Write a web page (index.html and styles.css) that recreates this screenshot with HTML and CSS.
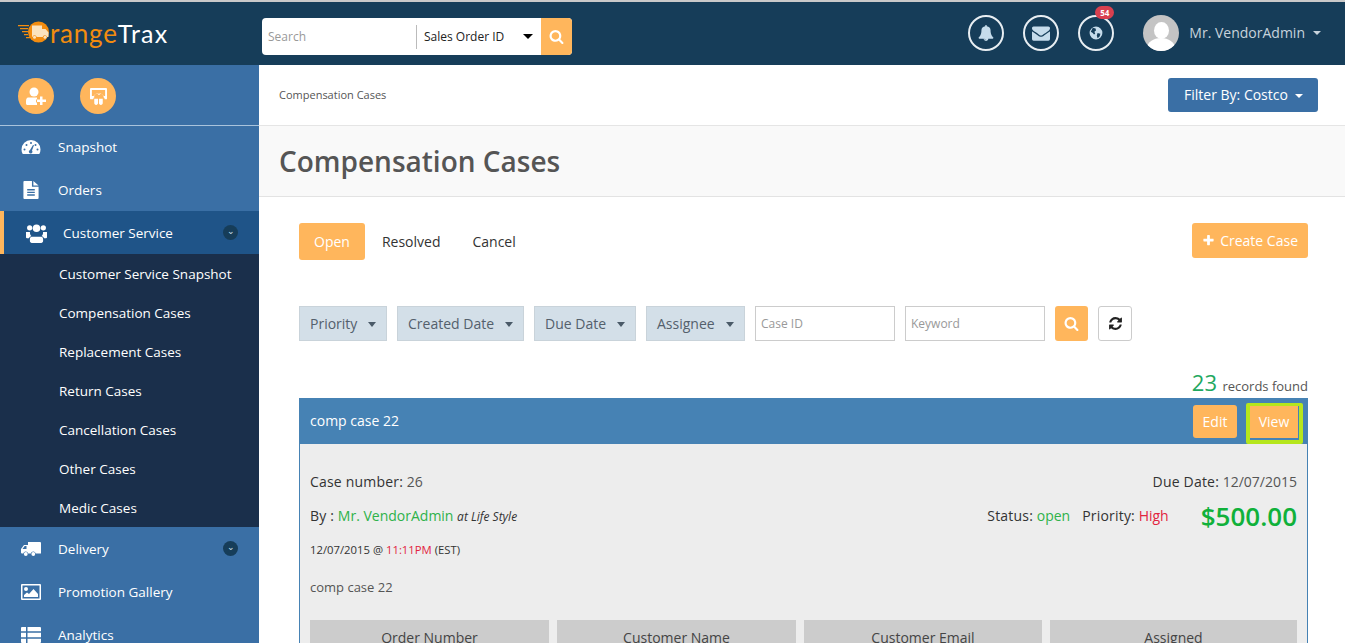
FILE: index.html
```html
<!DOCTYPE html>
<html>
<head>
    <meta charset="utf-8">
    <title>OrangeTrax - Compensation Cases</title>
    <link rel="stylesheet" href="styles.css">
</head>
<body>
<svg class="defs" width="0" height="0">
    <symbol id="i-search" viewBox="0 0 1792 1792"><path d="M1216 832q0-185-131.5-316.5t-316.5-131.5-316.5 131.5-131.5 316.5 131.5 316.5 316.5 131.5 316.5-131.5 131.5-316.5zm512 832q0 52-38 90t-90 38q-54 0-90-38l-343-342q-179 124-399 124-143 0-273.5-55.5t-225-150-150-225-55.5-273.5 55.5-273.5 150-225 225-150 273.5-55.5 273.5 55.5 225 150 150 225 55.5 273.5q0 220-124 399l343 343q37 37 37 90z"/></symbol>
    <symbol id="i-refresh" viewBox="0 0 1792 1792"><path d="M1639 1056q0 5-1 7-64 268-268 434.5t-478 166.5q-146 0-282.5-55t-243.5-157l-129 129q-19 19-45 19t-45-19-19-45v-448q0-26 19-45t45-19h448q26 0 45 19t19 45-19 45l-137 137q71 66 161 102t187 36q134 0 250-65t186-179q11-17 53-117 8-23 30-23h192q13 0 22.5 9.5t9.5 22.5zm25-800v448q0 26-19 45t-45 19h-448q-26 0-45-19t-19-45 19-45l138-138q-148-137-349-137-134 0-250 65t-186 179q-11 17-53 117-8 23-30 23h-199q-13 0-22.5-9.5t-9.5-22.5v-7q65-268 270-434.5t480-166.5q146 0 284 55.5t245 156.5l130-129q19-19 45-19t45 19 19 45z"/></symbol>
    <symbol id="i-bell" viewBox="0 0 1792 1792"><path d="M912 1696q0-16-16-16-59 0-101.5-42.5t-42.5-101.5q0-16-16-16t-16 16q0 73 51.5 124.5t124.5 51.5q16 0 16-16zm816-288q0 52-38 90t-90 38h-448q0 106-75 181t-181 75-181-75-75-181h-448q-52 0-90-38t-38-90q50-42 91-88t85-119.5 74.5-158.5 50-206 19.5-260q0-152 117-282.5t307-158.5q-8-19-8-39 0-40 28-68t68-28 68 28 28 68q0 20-8 39 190 28 307 158.5t117 282.5q0 139 19.5 260t50 206 74.5 158.5 85 119.5 91 88z"/></symbol>
    <symbol id="i-mail" viewBox="0 0 1792 1792"><path d="M1792 710v794q0 66-47 113t-113 47h-1472q-66 0-113-47t-47-113v-794q44 49 101 87 362 246 497 345 57 42 92.5 65.5t94.5 48 110 24.5h2q51 0 110-24.5t94.5-48 92.5-65.5q170-123 498-345 57-39 100-87zm0-294q0 79-49 151t-122 123q-376 261-468 325-10 7-42.5 30.5t-54 38-52 32.5-57.5 27-50 9h-2q-23 0-50-9t-57.5-27-52-32.5-54-38-42.5-30.5q-91-64-262-182.5t-205-142.5q-62-42-117-115.5t-55-136.5q0-78 41.5-130t118.5-52h1472q65 0 112.5 45t47.5 115z"/></symbol>
    <symbol id="i-plus" viewBox="0 0 1792 1792"><path d="M1600 736v192q0 40-28 68t-68 28h-416v416q0 40-28 68t-68 28h-192q-40 0-68-28t-28-68v-416h-416q-40 0-68-28t-28-68v-192q0-40 28-68t68-28h416v-416q0-40 28-68t68-28h192q40 0 68 28t28 68v416h416q40 0 68 28t28 68z"/></symbol>
    <symbol id="i-globe" viewBox="0 0 20 20"><path fill-rule="evenodd" d="M10 2a8 8 0 1 1 0 16 8 8 0 0 1 0-16zM6 3.500 9.500 4.500 10 7 8 8.500 9 11 7.500 12 6 10 3.500 8.500zM12 10l3.500 1-1 3.500-2.500 2-1-3.500z"/></symbol>
    <symbol id="i-gauge" viewBox="0 0 20 16"><path fill-rule="evenodd" d="M10 1a9.500 9.500 0 0 1 9.500 9.500c0 1.700-.4 3.200-1.200 4.500H1.700A9.300 9.300 0 0 1 .5 10.500 9.500 9.500 0 0 1 10 1zM10 3a1 1 0 1 0 0 2 1 1 0 0 0 0-2zM5.500 5a1 1 0 1 0 0 2 1 1 0 0 0 0-2zM14.500 5a1 1 0 1 0 0 2 1 1 0 0 0 0-2zM3.500 9.500a1 1 0 1 0 0 2 1 1 0 0 0 0-2zM16.500 9.500a1 1 0 1 0 0 2 1 1 0 0 0 0-2zM12 6 9 11a1.800 1.800 0 1 0 2 .5L13 6.300z"/></symbol>
    <symbol id="i-file" viewBox="0 0 16 19"><path fill-rule="evenodd" d="M1 0h8v6h7v12a1 1 0 0 1-1 1H1a1 1 0 0 1-1-1V1a1 1 0 0 1 1-1zM10.500 0 16 4.700h-5.500zM4 8.500v1.400h8V8.500zM4 11.300v1.400h8v-1.400zM4 14.100v1.400h8v-1.400z"/></symbol>
    <symbol id="i-users" viewBox="0 0 20 19"><circle cx="3.500" cy="4.500" r="2.500"/><circle cx="16.500" cy="4.500" r="2.500"/><circle cx="10" cy="5" r="3.600"/><path d="M0 8.500h3.800c-.2 1.500.3 2.900 1.300 3.800-1.200.5-2 1.300-2.400 2.200H1a1 1 0 0 1-1-1zM20 8.500h-3.800c.2 1.500-.3 2.900-1.300 3.800 1.200.5 2 1.300 2.400 2.200H19a1 1 0 0 0 1-1zM5.500 13h9c1.200 0 1.800 1 1.800 2.500v1.700c0 1-.8 1.800-1.800 1.800h-9c-1 0-1.800-.8-1.800-1.800v-1.700C3.700 14 4.300 13 5.500 13z"/></symbol>
    <symbol id="i-truck" viewBox="0 0 20 16"><path fill-rule="evenodd" d="M7 1h12a1 1 0 0 1 1 1v10.500h-5.300a2.500 2.500 0 0 0-4.900 0H7.200a2.500 2.500 0 0 0-4.900 0H1a1 1 0 0 1-1-1V8l3-4h4zM5.500 5H3.700L1.500 8h4z"/><circle cx="4.800" cy="13" r="1.900"/><circle cx="12.300" cy="13" r="1.900"/></symbol>
    <symbol id="i-picture" viewBox="0 0 20 16"><path fill-rule="evenodd" d="M1 0h18a1 1 0 0 1 1 1v14a1 1 0 0 1-1 1H1a1 1 0 0 1-1-1V1a1 1 0 0 1 1-1zM1.500 1.500v13h17v-13zM5 3a2 2 0 1 1 0 4 2 2 0 0 1 0-4zM3 13v-2l3-2.500 2 1.500 4.500-5 4.500 5v3z"/></symbol>
    <symbol id="i-list" viewBox="0 0 20 16"><path d="M0 1a1 1 0 0 1 1-1h4v4.300H0zM6.500 0H19a1 1 0 0 1 1 1v3.300H6.500zM0 5.800h5v4.400H0zM6.500 5.800H20v4.400H6.500zM0 11.700h5V16H1a1 1 0 0 1-1-1zM6.500 11.700H20V15a1 1 0 0 1-1 1H6.500z"/></symbol>
    <symbol id="i-useradd" viewBox="0 0 20 18"><circle cx="8" cy="5" r="4.500"/><path d="M2 10.500h9v2h-1v3h1V18H1.500C.7 18 0 17.300 0 16.500v-2.500c0-2 1-3.500 2-3.500z"/><path d="M14 9.500h2.500v3H20V15h-3.500v3H14v-3h-3v-2.500h3z"/></symbol>
    <symbol id="i-board" viewBox="0 0 18 18"><path fill-rule="evenodd" d="M1 0h16a1 1 0 0 1 1 1v10a1 1 0 0 1-1 1h-1.500c0-1.500-.5-2-1.200-2.300a2.600 2.600 0 0 0-2.500-3.300c-1 0-1.800.5-2.300 1.300a2.600 2.600 0 0 0-4.800 2C3.900 10 3.500 10.800 3.500 12H1a1 1 0 0 1-1-1V1a1 1 0 0 1 1-1zM2 2v6.500h1.800a4 4 0 0 1 5.200-2.300 4 4 0 0 1 5.200 2.300H16V2z"/><path d="M4.500 11.500h4v4.500c0 1-.7 2-2 2s-2-1-2-2zM9.500 11.500h4v4.500c0 1-.7 2-2 2s-2-1-2-2z"/></symbol>
    <symbol id="i-logo" viewBox="0 0 32 22"><circle cx="20.500" cy="11" r="10.500" fill="#f28c0f"/><path fill="#f28c0f" d="M0 4h11v1.300H0zM2 7h8v1.300H2zM4 10h6v1.300H4zM6 13h4v1.300H6zM8 16h4v1.300H8z"/><path fill="#fbe3bf" d="M14 4.500h10v3.500h3.500l3 3.500V16H29a2.200 2.200 0 0 0-4.300 0h-6a2.200 2.200 0 0 0-4.300 0H14z"/><circle cx="16.500" cy="16.300" r="1.500" fill="#fbe3bf"/><circle cx="27" cy="16.300" r="1.500" fill="#fbe3bf"/></symbol>
</svg>

<header class="topbar">
    <a class="logo">
        <svg class="logo-mark"><use href="#i-logo"/></svg><span class="logo-orange">range</span><span class="logo-white">Trax</span>
    </a>
    <form class="top-search">
        <span class="top-search-input">Search</span>
        <span class="top-search-type">Sales Order ID<i class="caret caret-black"></i></span>
        <span class="top-search-btn"><svg class="ico-14"><use href="#i-search"/></svg></span>
    </form>
    <div class="top-right">
        <a class="round-btn"><svg class="ico-16"><use href="#i-bell"/></svg></a>
        <a class="round-btn"><svg class="ico-18"><use href="#i-mail"/></svg></a>
        <a class="round-btn"><svg class="ico-15"><use href="#i-globe"/></svg><span class="badge">54</span></a>
        <span class="avatar"><span class="avatar-head"></span><span class="avatar-body"></span></span>
        <span class="username">Mr. VendorAdmin</span>
        <i class="caret caret-light"></i>
    </div>
</header>

<div class="layout">
    <aside class="sidebar">
        <div class="quick">
            <a class="quick-btn"><svg class="ico-quick"><use href="#i-useradd"/></svg></a>
            <a class="quick-btn"><svg class="ico-quick2"><use href="#i-board"/></svg></a>
        </div>
        <nav>
            <a class="nav-item nav-first"><svg class="nav-ico"><use href="#i-gauge"/></svg>Snapshot</a>
            <a class="nav-item"><svg class="nav-ico"><use href="#i-file"/></svg>Orders</a>
            <a class="nav-item nav-active"><svg class="nav-ico"><use href="#i-users"/></svg>Customer Service<span class="nav-toggle">&#8964;</span></a>
            <ul class="subnav">
                <li>Customer Service Snapshot</li>
                <li>Compensation Cases</li>
                <li>Replacement Cases</li>
                <li>Return Cases</li>
                <li>Cancellation Cases</li>
                <li>Other Cases</li>
                <li>Medic Cases</li>
            </ul>
            <a class="nav-item"><svg class="nav-ico"><use href="#i-truck"/></svg>Delivery<span class="nav-toggle">&#8964;</span></a>
            <a class="nav-item"><svg class="nav-ico"><use href="#i-picture"/></svg>Promotion Gallery</a>
            <a class="nav-item"><svg class="nav-ico"><use href="#i-list"/></svg>Analytics</a>
        </nav>
    </aside>

    <main class="main">
        <div class="crumbs">
            <span class="crumb">Compensation Cases</span>
            <a class="filter-by">Filter By: Costco<i class="caret caret-white"></i></a>
        </div>
        <div class="page-title"><h1>Compensation Cases</h1></div>

        <div class="content">
            <div class="tabs">
                <a class="tab tab-on">Open</a>
                <a class="tab">Resolved</a>
                <a class="tab">Cancel</a>
                <a class="create-btn"><svg class="ico-12"><use href="#i-plus"/></svg>Create Case</a>
            </div>

            <div class="filters">
                <a class="drop drop-priority">Priority<i class="caret caret-dark"></i></a>
                <a class="drop drop-created">Created Date<i class="caret caret-dark"></i></a>
                <a class="drop drop-due">Due Date<i class="caret caret-dark"></i></a>
                <a class="drop drop-assignee">Assignee<i class="caret caret-dark"></i></a>
                <span class="field">Case ID</span>
                <span class="field">Keyword</span>
                <a class="filter-search"><svg class="ico-14"><use href="#i-search"/></svg></a>
                <a class="filter-reset"><svg class="ico-14"><use href="#i-refresh"/></svg></a>
            </div>

            <div class="records"><b>23</b> records found</div>

            <section class="case">
                <div class="case-head">
                    <span class="case-name">comp case 22</span>
                    <a class="case-btn">Edit</a>
                    <a class="case-view"><span class="case-view-in">View</span></a>
                </div>
                <div class="case-body">
                    <div class="row row-first">
                        <span><em class="lbl">Case number:</em> 26</span>
                        <span><em class="lbl">Due Date:</em> 12/07/2015</span>
                    </div>
                    <div class="row row-second">
                        <span class="by"><em class="lbl">By :</em> <span class="green">Mr. VendorAdmin</span> <i class="at">at Life Style</i></span>
                        <span class="status"><em class="lbl">Status:</em> <span class="green">open</span></span>
                        <span class="priority"><em class="lbl">Priority:</em> <span class="red">High</span></span>
                        <span class="amount">$500.00</span>
                    </div>
                    <div class="stamp">12/07/2015 @ <span class="red">11:11PM</span> (EST)</div>
                    <p class="desc">comp case 22</p>
                    <div class="cols">
                        <div class="col">Order Number</div>
                        <div class="col">Customer Name</div>
                        <div class="col">Customer Email</div>
                        <div class="col">Assigned</div>
                    </div>
                </div>
            </section>
        </div>
    </main>
</div>
</body>
</html>
```

FILE: styles.css
```css
html, body {height:100%; margin:0; overflow:hidden;}
body {font-family:"Open Sans", sans-serif; font-size:14px; color:#444; background:#fff; border-top:2px solid #c9c9c9; box-sizing:border-box;}
.defs {position:absolute;}
svg {fill:currentColor; display:block;}
a {display:block;}
ul {list-style:none; margin:0; padding:0;}
em {font-style:normal;}

.ico-12 {width:13px; height:13px;}
.ico-14 {width:15px; height:15px;}
.ico-15 {width:16px; height:16px;}
.ico-16 {width:16px; height:16px;}
.ico-18 {width:18px; height:18px;}

.caret {display:inline-block; width:0; height:0; border-left:4px solid transparent; border-right:4px solid transparent; border-top:4px solid #fff;}
.caret-black {border-top-color:#000; border-left-width:5px; border-right-width:5px; border-top-width:5px; margin-left:19px; vertical-align:2px;}
.caret-light {border-top-color:#c7d3dc;}
.caret-white {margin-left:7px; vertical-align:2px;}
.caret-dark {border-top-color:#4a5a68; border-top-width:5px; margin-left:11px; vertical-align:2px;}

/* top bar */
.topbar {height:63px; background:#163d59; display:flex; align-items:flex-start; padding-right:24px;}
.logo {width:262px; height:63px; flex:none; box-sizing:border-box; padding-left:18px; display:flex; align-items:center; font-family:Lato, sans-serif; font-weight:300;}
.logo-mark {width:32px; height:22px; margin-top:-3px; flex:none;}
.logo-orange {color:#f28c0f; font-size:26px; font-weight:400; letter-spacing:.8px; margin-top:-2px;}
.logo-white {color:#fff; font-size:25px; font-weight:400; letter-spacing:1.200px; margin-top:-2px;}
.top-search {width:310px; height:37px; margin:16px 0 0; background:#fff; border-radius:4px; display:flex; align-items:center; overflow:hidden; font-size:12px;}
.top-search-input {width:154px; padding-left:6px; box-sizing:border-box; color:#999;}
.top-search-type {flex:1; height:24px; line-height:24px; border-left:1px solid #bbb; padding-left:7px; color:#222; white-space:nowrap;}
.top-search-btn {width:31px; height:37px; background:#ffb65c; color:#fff; display:flex; align-items:center; justify-content:center;}
.top-right {margin-left:auto; height:63px; display:flex; align-items:center; color:#c7d3dc; margin-top:-1px;}
.round-btn {width:36px; height:36px; box-sizing:border-box; border:2px solid #e8eef2; border-radius:50%; margin-left:19px; display:flex; align-items:center; justify-content:center; color:#c6dceb; position:relative;}
.badge {position:absolute; top:-11px; right:-2px; background:#d9404f; color:#fff; font-size:8px; font-weight:700; line-height:13px; padding:0 5px; border-radius:7px;}
.avatar {width:36px; height:36px; margin-left:29px; border-radius:50%; background:#c4c4c4; overflow:hidden; display:flex; flex-direction:column; align-items:center;}
.avatar-head {width:15px; height:17px; margin-top:7px; background:#fff; border-radius:50%; flex:none;}
.avatar-body {width:28px; height:20px; margin-top:-1px; background:#fff; border-radius:50% 50% 0 0; flex:none;}
.username {margin-left:10px; margin-right:8px; font-size:14px;}

.layout {display:flex; height:calc(100% - 63px);}

/* sidebar */
.sidebar {width:259px; flex:none; background:#3a6fa5; color:#fff; overflow:hidden; font-size:13.500px;}
.quick {height:61px; box-sizing:border-box; padding:2px 0 0 18px; border-bottom:1px solid #a9c3dc; display:flex; align-items:center; gap:26px;}
.quick-btn {width:36px; height:36px; border-radius:50%; background:#ffb65c; color:#fff; display:flex; align-items:center; justify-content:center;}
.ico-quick {width:20px; height:18px;}
.ico-quick2 {width:17px; height:17px;}
.nav-item {height:43px; display:flex; align-items:center; padding-left:21px; position:relative;}
.nav-first {height:42px;}
.nav-ico {width:20px; height:18px; margin-right:17px; flex:none;}
.nav-active {background:#1f5488; border-left:4px solid #ffb65c; padding-left:22px;}
.nav-active .nav-ico {width:21px; height:20px; margin-right:16px;}
.nav-toggle {position:absolute; right:21px; top:14px; width:15px; height:15px; border-radius:50%; background:#163d59; color:#cfe0ee; font-size:9px; line-height:11px; text-align:center;}
.subnav {background:#1a2f4b;}
.subnav li {height:39px; line-height:41px; padding-left:59px;}

/* main column */
.main {flex:1; min-width:0;}
.crumbs {height:60px; border-bottom:1px solid #e5e5e5; display:flex; align-items:center; justify-content:space-between; padding:0 27px 0 20px;}
.crumb {font-size:11px; color:#555; margin-top:-2px;}
.filter-by {height:34px; line-height:34px; padding:0 16px; background:#3a6fa5; border-radius:3px; color:#fff; width:118px; white-space:nowrap;}
.page-title {height:70px; background:#f9f9f9; border-bottom:1px solid #e3e3e3; display:flex; align-items:center; padding-left:20px;}
.page-title h1 {margin:0; font-size:28px; font-weight:600; color:#555;}
.content {padding:26px 37px 0 40px;}

.tabs {display:flex; align-items:flex-start;}
.tab {padding:0 17px; height:37px; line-height:38px; color:#333;}
.tab + .tab + .tab {padding-left:15px;}
.tab-on {background:#ffb65c; color:#fff; border-radius:3px; padding:0 15px;}
.create-btn {margin-left:auto; height:35px; padding:0 10px; background:#ffb65c; color:#fff; border-radius:3px; display:flex; align-items:center; gap:5px;}

.filters {display:flex; gap:10px; margin-top:46px; align-items:stretch; height:35px;}
.drop {background:#d3dfe8; border:1px solid #c9d3da; box-sizing:border-box; line-height:33px; color:#54606c; padding-left:10px; white-space:nowrap;}
.drop-priority {width:88px;}
.drop-created {width:127px;}
.drop-due {width:102px;}
.drop-assignee {width:99px;}
.field {width:140px; box-sizing:border-box; border:1px solid #ccc; font-size:12px; line-height:33px; padding-left:5px; color:#999;}
.filter-search {width:33px; background:#ffb65c; color:#fff; border-radius:3px; display:flex; align-items:center; justify-content:center;}
.filter-reset {width:34px; box-sizing:border-box; border:1px solid #ccc; border-radius:3px; color:#222; display:flex; align-items:center; justify-content:center;}

.records {text-align:right; height:22px; line-height:22px; margin-top:30px; font-size:13px; color:#555;}
.records b {font-size:22px; font-weight:400; color:#1fa85f; margin-right:2px;}

.case {border:solid #4682b4; border-width:0 1px; margin-top:5px;}
.case-head {height:46px; margin:0 -1px; background:#4682b4; color:#fff; display:flex; align-items:flex-start; padding:0 5px 0 11px;}
.case-name {margin:13px auto 0 0;}
.case-btn {width:44px; height:33px; line-height:33px; text-align:center; background:#ffb65c; border-radius:3px; margin-top:7px;}
.case-view {width:57px; height:41px; box-sizing:border-box; margin:5px 0 0 9px; border:solid #b5e61d; border-width:3px 4px 4px; border-radius:2px;}
.case-view-in {display:block; height:32px; line-height:31px; margin-right:1px; text-align:center; background:#ffb65c;}
.case-body {background:#ededed; padding:0 10px; height:260px;}
.row {display:flex; justify-content:space-between; align-items:center; color:#555;}
.lbl {color:#333; letter-spacing:.2px;}
.row-first {padding-top:28px; height:20px; line-height:20px;}
.row-second {margin-top:8px; height:30px; justify-content:flex-start;}
.by {margin-right:auto;}
.green {color:#2eb24a;}
.red {color:#e2243f;}
.at {font-size:12px; color:#333;}
.status {margin-right:12px;}
.priority {margin-right:32px;}
.amount {font-size:26px; font-weight:600; color:#10b13a; line-height:30px; margin-top:1px;}
.stamp {font-size:11.300px; color:#333; margin-top:12px; line-height:15px;}
.desc {margin:21px 0 0; font-size:13px; color:#555; line-height:18px;}
.cols {display:grid; grid-template-columns:239px 239px 238px 1fr; gap:8px; margin-top:24px;}
.col {height:40px; background:#ccc; text-align:center; line-height:36px; color:#444;}
```
